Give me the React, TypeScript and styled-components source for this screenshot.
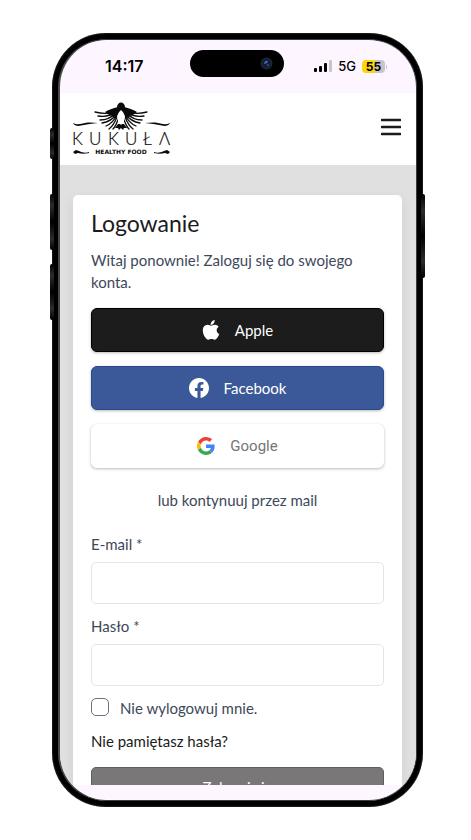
import React from "react";
import styled, { createGlobalStyle } from "styled-components";

const GlobalStyle = createGlobalStyle`
  *, *::before, *::after { box-sizing: border-box; }
  body { margin: 0; background: #ffffff; font-family: "Noto Sans", sans-serif; }
`;

const bodyFont = `"Lato", "Noto Sans", sans-serif`;

const Page = styled.div`
  display: flex;
  height: 100vh;
  padding: 33px 48px 33px 52px;
  background: #ffffff;
`;

const Phone = styled.div`
  position: relative;
  display: flex;
  flex: 1;
  min-width: 0;
  padding: 6px;
  border-radius: 54px;
  background: #000000;
  box-shadow: inset 0 0 2px 0 #5a5a5a;
`;

const SideKey = styled.span<{ $side: "left" | "right"; $top: number; $length: number }>`
  position: absolute;
  ${(p) => p.$side}: -2px;
  top: ${(p) => p.$top}px;
  width: 4px;
  height: ${(p) => p.$length}px;
  border-radius: 2px;
  background: linear-gradient(#000000, #2c2c2c 20%, #000000 50%, #2c2c2c 80%, #000000);
`;

const Screen = styled.div`
  display: flex;
  flex: 1;
  flex-direction: column;
  min-width: 0;
  overflow: hidden;
  border: 1px solid #3c3c3c;
  border-left: 2px solid #4a4a4a;
  border-radius: 48px;
  background: #fdf5ff;
`;

const StatusBar = styled.div`
  display: grid;
  grid-template-columns: 1fr auto 1fr;
  flex: none;
  align-items: center;
  height: 53px;
  padding: 0 31px 1px 45px;
  color: #000000;
  font-family: "Inter", sans-serif;
`;

const Clock = styled.time`
  font-size: 16px;
  font-weight: 600;
`;

const Island = styled.div`
  display: flex;
  align-items: center;
  justify-content: flex-end;
  width: 94px;
  height: 27px;
  margin: 0 16px 6px 0;
  padding-right: 11px;
  border-radius: 14px;
  background: #000000;
`;

const Indicators = styled.div`
  display: flex;
  align-items: center;
  justify-content: flex-end;
  gap: 6px;
  font-size: 13px;
  font-weight: 500;
`;

const Battery = styled.span`
  position: relative;
  width: 23px;
  height: 13px;
  border-radius: 4px;
  background: linear-gradient(90deg, #ffd60a 55%, #c9c4cb 55%);
  font-size: 12px;
  font-weight: 700;
  line-height: 13px;
  text-align: center;

  &::after {
    content: "";
    position: absolute;
    top: 5px;
    right: -2px;
    width: 1px;
    height: 4px;
    background: #c9c4cb;
  }
`;

const Header = styled.header`
  display: flex;
  flex: none;
  align-items: center;
  justify-content: space-between;
  height: 72px;
  padding: 0 15px 0 12px;
  background: #ffffff;
`;

const LogoLink = styled.a`
  display: block;
  width: 100px;
  height: 54px;
`;

const MenuButton = styled.button`
  display: flex;
  padding: 0;
  margin-bottom: 4px;
  border: 0;
  background: none;
  color: #1b1b1b;
  cursor: pointer;
`;

const Main = styled.main`
  flex: 1;
  min-height: 0;
  padding: 30px 14px 0 13px;
  overflow: hidden;
  background: #e0e0e0;
`;

const Card = styled.form`
  display: flex;
  flex-direction: column;
  padding: 14px 18px 24px;
  border-radius: 5px;
  background: #ffffff;
  box-shadow: 0 4px 12px rgba(0, 0, 0, 0.08);
  color: #3d4859;
  font-family: ${bodyFont};
  font-size: 15px;
  line-height: 22px;
`;

const Title = styled.h1`
  margin: 0 0 11px;
  color: #1b1b1b;
  font-family: ${bodyFont};
  font-size: 23px;
  font-weight: 400;
  line-height: 29px;
`;

const Intro = styled.p`
  margin: 0 0 15px;
`;

const Providers = styled.div`
  display: grid;
  gap: 14px;
`;

const ProviderButton = styled.button<{ $bg: string; $edge: string; $ink: string; $sans?: boolean }>`
  display: flex;
  align-items: center;
  justify-content: center;
  gap: 15px;
  height: 44px;
  padding: 0 6px 1px;
  border: 1px solid ${(p) => p.$edge};
  border-radius: 6px;
  background: ${(p) => p.$bg};
  box-shadow: 0 1px 3px rgba(0, 0, 0, 0.28);
  color: ${(p) => p.$ink};
  font-family: ${(p) => (p.$sans ? `"Roboto", sans-serif` : bodyFont)};
  font-size: 15px;
  cursor: pointer;
`;

const Divider = styled.p`
  margin: 21px 0 22px;
  text-align: center;
`;

const Field = styled.div`
  display: grid;
  gap: 7px;
  margin-bottom: 11px;
`;

const TextInput = styled.input`
  width: 100%;
  height: 42px;
  padding: 0 12px;
  border: 1px solid #e3e5e9;
  border-radius: 5px;
  background: #ffffff;
  color: inherit;
  font: inherit;
`;

const Remember = styled.label`
  display: flex;
  align-items: center;
  gap: 11px;
`;

const CheckBox = styled.input`
  appearance: none;
  width: 18px;
  height: 18px;
  margin: 0 0 2px;
  border: 1px solid #6b7280;
  border-radius: 5px;
  background: #ffffff;

  &:checked { background: #1b1b1b; }
`;

const ForgotLink = styled.a`
  align-self: flex-start;
  margin: 11px 0 15px;
  color: #1b1b1b;
  text-decoration: none;
`;

const SubmitButton = styled.button`
  height: 40px;
  border: 1px solid #5f5d5e;
  border-radius: 5px;
  background: #7a7778;
  color: #ffffff;
  font-family: ${bodyFont};
  font-size: 15px;
`;

const HomeArea = styled.div`
  flex: none;
  height: 15px;
`;

const feathers = [
  "M44 8 C39 12 31 12 23 10",
  "M44 9 C39 14 33 15 26 14",
  "M44 11 C40 15 35 18 28 18",
  "M45 12 C41 17 37 20 30 21",
  "M45 13 C42 19 39 22 34 24",
  "M45 15 C43 20 41 24 37 27",
  "M46 17 C45 21 43 25 41 27",
];

function Wing() {
  return (
    <g>
      <path d="M46 5 C41 6 36 8 33 10 C36 13 40 13 44 17 L47 9Z" fill="#0b0b0b" />
      <g fill="none" stroke="#0b0b0b" strokeWidth="1.3" strokeLinecap="round">
        {feathers.map((d) => <path key={d} d={d} />)}
      </g>
    </g>
  );
}

function Logo() {
  return (
    <svg width="100" height="54" viewBox="0 0 100 54" role="img" aria-label="Kukuła Healthy Food">
      <Wing />
      <g transform="matrix(-1 0 0 1 98 0)"><Wing /></g>
      <g fill="#0b0b0b">
        <ellipse cx="49" cy="5" rx="4" ry="4.4" />
        <path d="M45 6 H53 L54 13 H44Z" />
        <path d="M46 22 L43 26 L46 26 L47 28 L49 26 L51 28 L52 26 L55 26 L52 22Z" />
        <path d="M1 21 C5 23 9 22 13 21 C18 20 22 21 26 21 C20 22 15 22 12 23 C8 24 3 25 1 21Z" />
        <path d="M98 21 C94 23 90 22 86 21 C81 20 77 21 73 21 C79 22 84 22 87 23 C91 24 96 25 98 21Z" />
        <path d="M1 50 L4 48 L7 49 C11 51 14 51 17 50 L17 51 C13 52 10 52 6 51 L3 52Z" />
        <path d="M98 50 L95 48 L92 49 C88 51 85 51 82 50 L82 51 C86 52 89 52 93 51 L96 52Z" />
      </g>
      <path d="M49 8 C54 12 54 19 49 23 C44 19 44 12 49 8Z" fill="#ffffff" />
      <text x="0 17 36 53 71 87" y="43" fontFamily="Lato, sans-serif" fontSize="17" fontWeight="300" fill="#0b0b0b" stroke="#0b0b0b" strokeWidth="0.2">KUKUŁΛ</text>
      <text x="49" y="52" textAnchor="middle" fontFamily="DejaVu Sans, sans-serif" fontSize="6" fontWeight="700" fill="#0b0b0b">HEALTHY FOOD</text>
    </svg>
  );
}

function AppleIcon() {
  return (
    <svg width="18" height="20" viewBox="0 0 18 20" fill="#ffffff" aria-hidden="true">
      <path d="M12.7 0C12.8 1.3 12.3 2.5 11.6 3.4 10.8 4.3 9.8 4.9 8.6 4.8 8.5 3.6 9 2.4 9.8 1.5 10.5.7 11.7.1 12.7 0ZM16.7 6.8C15.4 7.6 14.6 8.8 14.7 10.3 14.7 12.1 15.7 13.4 17.3 14.1 16.9 15.3 16.3 16.5 15.5 17.6 14.7 18.7 13.9 19.8 12.6 19.8 11.4 19.8 10.9 19.1 9.5 19.1 8 19.1 7.5 19.8 6.3 19.8 5 19.8 4.1 18.7 3.3 17.5.9 14.1-.2 9.4 2 6.6 2.9 5.4 4.2 4.7 5.6 4.7 7 4.7 8 5.5 9.1 5.5 10.2 5.5 11.3 4.6 13 4.7 14.4 4.7 15.8 5.4 16.7 6.8Z" />
    </svg>
  );
}

function FacebookIcon() {
  return (
    <svg width="20" height="20" viewBox="0 0 24 24" fill="#ffffff" aria-hidden="true">
      <path d="M24 12.07C24 5.4 18.63 0 12 0S0 5.4 0 12.07C0 18.1 4.39 23.1 10.13 24v-8.44H7.08v-3.49h3.05V9.41c0-3.02 1.79-4.69 4.53-4.69 1.31 0 2.68.24 2.68.24v2.97h-1.51c-1.49 0-1.95.93-1.95 1.88v2.26h3.32l-.53 3.49h-2.79V24C19.61 23.1 24 18.1 24 12.07Z" />
    </svg>
  );
}

function GoogleIcon() {
  return (
    <svg width="18" height="18" viewBox="0 0 48 48" aria-hidden="true">
      <path fill="#EA4335" d="M24 9.5c3.54 0 6.71 1.22 9.21 3.6l6.85-6.85C35.9 2.38 30.47 0 24 0 14.62 0 6.51 5.38 2.56 13.22l7.98 6.19C12.43 13.72 17.74 9.5 24 9.5z" />
      <path fill="#4285F4" d="M46.98 24.55c0-1.57-.15-3.09-.38-4.55H24v9.02h12.94c-.58 2.96-2.26 5.48-4.78 7.18l7.73 6c4.51-4.18 7.09-10.36 7.09-17.65z" />
      <path fill="#FBBC05" d="M10.53 28.59c-.48-1.45-.76-2.99-.76-4.59s.27-3.14.76-4.59l-7.98-6.19C.92 16.46 0 20.12 0 24s.92 7.54 2.56 10.78l7.97-6.19z" />
      <path fill="#34A853" d="M24 48c6.48 0 11.93-2.13 15.89-5.81l-7.73-6c-2.15 1.45-4.92 2.3-8.16 2.3-6.26 0-11.57-4.22-13.47-9.91l-7.98 6.19C6.51 42.62 14.62 48 24 48z" />
    </svg>
  );
}

function Camera() {
  return (
    <svg width="13" height="13" viewBox="0 0 13 13" aria-hidden="true">
      <circle cx="6.5" cy="6.5" r="6" fill="#20242c" />
      <circle cx="6.5" cy="6.5" r="4" fill="#101b3a" />
      <path d="M4 7 A3 3 0 0 1 8 4 L7 6Z" fill="#3d70c9" />
      <circle cx="8" cy="8" r="1.2" fill="#24478e" />
    </svg>
  );
}

function Signal() {
  return (
    <svg width="18" height="12" viewBox="0 0 18 12" aria-hidden="true">
      <rect x="0" y="8" width="3" height="4" rx="1" />
      <rect x="5" y="6" width="3" height="6" rx="1" />
      <rect x="10" y="3" width="3" height="9" rx="1" />
      <rect x="15" y="0" width="3" height="12" rx="1" fill="#c9c4cb" />
    </svg>
  );
}

export default function App() {
  return (
    <>
      <GlobalStyle />
      <Page>
        <Phone>
          <SideKey $side="left" $top={95} $length={31} />
          <SideKey $side="left" $top={161} $length={56} />
          <SideKey $side="left" $top={231} $length={56} />
          <SideKey $side="right" $top={161} $length={84} />
          <Screen>
            <StatusBar>
              <Clock>14:17</Clock>
              <Island><Camera /></Island>
              <Indicators>
                <Signal />
                <span>5G</span>
                <Battery>55</Battery>
              </Indicators>
            </StatusBar>
            <Header>
              <LogoLink href="#"><Logo /></LogoLink>
              <MenuButton type="button" aria-label="Menu">
                <svg width="20" height="18" viewBox="0 0 20 18" aria-hidden="true">
                  <path d="M1 2H19M1 9H19M1 16H19" stroke="currentColor" strokeWidth="2.6" strokeLinecap="round" />
                </svg>
              </MenuButton>
            </Header>
            <Main>
              <Card>
                <Title>Logowanie</Title>
                <Intro>Witaj ponownie! Zaloguj się do swojego konta.</Intro>
                <Providers>
                  <ProviderButton type="button" $bg="#1c1c1c" $edge="#000000" $ink="#ffffff"><AppleIcon />Apple</ProviderButton>
                  <ProviderButton type="button" $bg="#3b5998" $edge="#264a8f" $ink="#ffffff"><FacebookIcon />Facebook</ProviderButton>
                  <ProviderButton type="button" $bg="#ffffff" $edge="#ffffff" $ink="#757575" $sans><GoogleIcon />Google</ProviderButton>
                </Providers>
                <Divider>lub kontynuuj przez mail</Divider>
                <Field>
                  <label htmlFor="email">E-mail *</label>
                  <TextInput id="email" type="email" />
                </Field>
                <Field>
                  <label htmlFor="password">Hasło *</label>
                  <TextInput id="password" type="password" />
                </Field>
                <Remember><CheckBox type="checkbox" />Nie wylogowuj mnie.</Remember>
                <ForgotLink href="#">Nie pamiętasz hasła?</ForgotLink>
                <SubmitButton type="submit">Zaloguj się</SubmitButton>
              </Card>
            </Main>
            <HomeArea />
          </Screen>
        </Phone>
      </Page>
    </>
  );
}
